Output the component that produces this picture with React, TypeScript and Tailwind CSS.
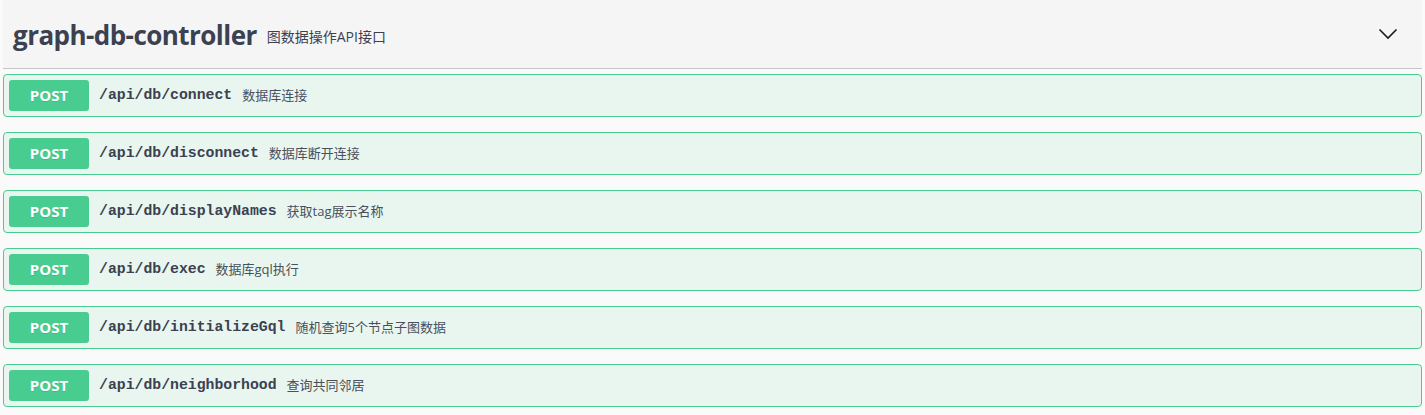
const ops = [
  { path: "/api/db/connect", desc: "数据库连接" },
  { path: "/api/db/disconnect", desc: "数据库断开连接" },
  { path: "/api/db/displayNames", desc: "获取tag展示名称" },
  { path: "/api/db/exec", desc: "数据库gql执行" },
  { path: "/api/db/initializeGql", desc: "随机查询5个节点子图数据" },
  { path: "/api/db/neighborhood", desc: "查询共同邻居" },
];

const sans = "font-['Open_Sans','Noto_Sans_CJK_SC',sans-serif]";

function OpBlock({ path, desc }: { path: string; desc: string }) {
  return (
    <div className="mb-[15px] flex items-center rounded-[4px] border border-[#49cc90] bg-[#e8f6ef] p-[5px]">
      <span
        className={`${sans} flex h-[31px] w-[80px] items-center justify-center rounded-[3px] bg-[#49cc90] text-[15px] font-bold text-white [text-shadow:0_1px_0_rgba(0,0,0,0.1)]`}
      >
        POST
      </span>
      <span className="px-[10px] font-['Liberation_Mono',monospace] text-[14.8px] font-bold text-[#3b4151]">
        {path}
      </span>
      <span className={`${sans} text-[13px] text-[#4a4f5c]`}>{desc}</span>
    </div>
  );
}

export default function App() {
  return (
    <main className="min-h-screen bg-[#fafafa]">
      <section className="mx-[3px]">
        <div className="mb-[5px] flex h-[69px] items-center border-b border-[#c4c6cb] bg-[#f5f5f5] pl-[10px] pr-[20px] pt-[3px]">
          <h3 className={`${sans} text-[26px] font-bold tracking-[-0.55px] text-[#3b4151]`}>graph-db-controller</h3>
          <small className={`${sans} flex-1 px-[10px] pt-[2px] text-[14px] text-[#3b4151]`}>
            图数据操作API接口
          </small>
          <svg width="20" height="20" viewBox="0 0 20 20" className="mb-[3px] mr-[4px] text-[#1a1a1a]">
            <path d="M1.5 5.5 L10 14 L18.5 5.5" fill="none" stroke="currentColor" strokeWidth="1.6" />
          </svg>
        </div>
        {ops.map((o) => (
          <OpBlock key={o.path} {...o} />
        ))}
      </section>
    </main>
  );
}
